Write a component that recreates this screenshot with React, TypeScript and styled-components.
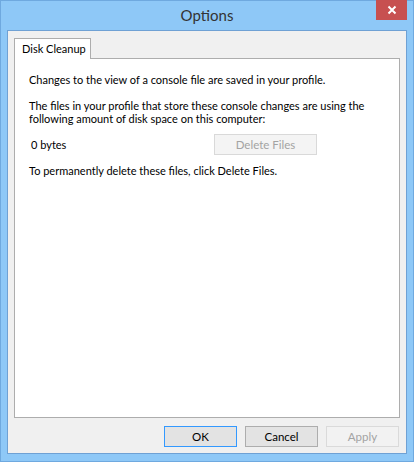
import styled, { createGlobalStyle } from 'styled-components';

const GlobalStyle = createGlobalStyle`
  html, body {
    margin: 0;
    padding: 0;
    background: #ffffff;
  }
  * {
    box-sizing: border-box;
  }
`;

const App = () => {
  return (
    <>
      <GlobalStyle />
      <Window>
        <TitleBar>
          <span />
          <Title>Options</Title>
          <CloseButton aria-label="Close">
            <svg width="10" height="10" viewBox="0 0 10 10">
              <path d="M1.5 1.5 L8.5 8.5 M8.5 1.5 L1.5 8.5" stroke="#ffffff" strokeWidth="2" />
            </svg>
          </CloseButton>
        </TitleBar>
        <Client>
          <Tabs>
            <Tab>Disk Cleanup</Tab>
          </Tabs>
          <Panel>
            <Text>Changes to the view of a console file are saved in your profile.</Text>
            <Text $top={13}>
              The files in your profile that store these console changes are using the
              <br />
              following amount of disk space on this computer:
            </Text>
            <SizeRow>
              <Size>0 bytes</Size>
              <DeleteButton disabled>Delete Files</DeleteButton>
            </SizeRow>
            <Text $top={9}>To permanently delete these files, click Delete Files.</Text>
          </Panel>
          <Buttons>
            <DialogButton $variant="default">OK</DialogButton>
            <DialogButton>Cancel</DialogButton>
            <DialogButton $variant="disabled" disabled>
              Apply
            </DialogButton>
          </Buttons>
        </Client>
      </Window>
    </>
  );
};

export default App;

const Window = styled.div`
  width: 414px;
  height: 462px;
  display: flex;
  flex-direction: column;
  background: #8ec8f7;
  border: 1px solid #6fa9df;
  font-family: Lato, 'Noto Sans', sans-serif;
  font-size: 11px;
  color: #000000;
`;

const TitleBar = styled.div`
  height: 29px;
  display: grid;
  grid-template-columns: 1fr auto 1fr;
  align-items: start;
  padding: 0 6px 0 6px;
`;

const Title = styled.div`
  font-size: 15px;
  line-height: 29px;
  color: #333333;
`;

const CloseButton = styled.button`
  justify-self: end;
  width: 31px;
  height: 20px;
  margin-top: -1px;
  border: none;
  padding: 0;
  background: #c75050;
  display: flex;
  align-items: center;
  justify-content: center;
`;

const Client = styled.div`
  flex: 1;
  margin: 0 6px 7px 6px;
  border: 1px solid #6fa1d4;
  background: #f0f0f0;
  padding: 7px 6px 6px 6px;
  display: flex;
  flex-direction: column;
`;

const Tabs = styled.div`
  display: flex;
  height: 20px;
`;

const Tab = styled.div`
  width: 77px;
  height: 21px;
  border: 1px solid #adadad;
  border-bottom: none;
  background: #ffffff;
  padding-left: 7px;
  line-height: 19px;
  white-space: nowrap;
  position: relative;
  z-index: 1;
`;

const Panel = styled.div`
  flex: 1;
  border: 1px solid #adadad;
  background: #ffffff;
  padding: 14px 14px 0 14px;
`;

const Text = styled.p<{ $top?: number }>`
  margin: ${({ $top }) => $top ?? 0}px 0 0 0;
  line-height: 13px;
  white-space: nowrap;
`;

const SizeRow = styled.div`
  display: flex;
  align-items: center;
  margin-top: 9px;
`;

const Size = styled.span`
  width: 185px;
  padding-left: 2px;
`;

const DeleteButton = styled.button`
  width: 103px;
  height: 21px;
  border: 1px solid #d9d9d9;
  background: #f4f4f4;
  color: #a3a3a3;
  font: inherit;
  font-size: 11.5px;
  padding: 0;
`;

const Buttons = styled.div`
  display: flex;
  justify-content: flex-end;
  gap: 8px;
  padding-top: 8px;
  padding-right: 1px;
`;

const DialogButton = styled.button<{ $variant?: 'default' | 'disabled' }>`
  width: 73px;
  height: 21px;
  padding: 0;
  font: inherit;
  font-size: 11.5px;
  color: ${({ $variant }) => ($variant === 'disabled' ? '#a3a3a3' : '#000000')};
  background: ${({ $variant }) => ($variant === 'disabled' ? '#f2f2f2' : '#e3e3e3')};
  border: 1px solid
    ${({ $variant }) =>
      $variant === 'default' ? '#3399ff' : $variant === 'disabled' ? '#dadada' : '#adadad'};
`;
